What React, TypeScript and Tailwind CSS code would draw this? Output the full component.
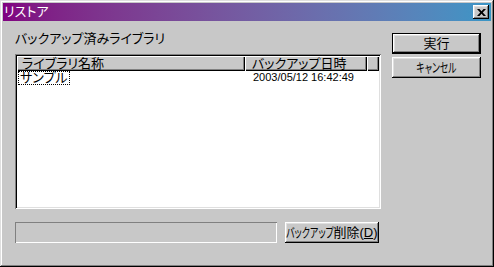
const raised =
  "shadow-[inset_-1px_-1px_#000,inset_1px_1px_#fff,inset_-2px_-2px_#808080,inset_2px_2px_#dfdfdf]";
const sunken =
  "shadow-[inset_1px_1px_#808080,inset_-1px_-1px_#fff,inset_2px_2px_#000,inset_-2px_-2px_#dfdfdf]";
const headerCell =
  "shadow-[inset_1px_1px_#fff,inset_-1px_-1px_#000,inset_-2px_-2px_#808080]";

export default function App() {
  return (
    <div className="w-[494px] h-[267px] bg-[#c8c8c8] p-[3px] flex flex-col font-['Liberation_Sans','Noto_Sans_CJK_JP',sans-serif] text-[13px] text-black [font-feature-settings:'palt'] shadow-[inset_-1px_-1px_#000,inset_1px_1px_#dfdfdf,inset_-2px_-2px_#808080,inset_2px_2px_#fff]">
      {/* Title bar */}
      <div className="h-[18px] flex items-center justify-between bg-gradient-to-r from-[#800080] to-[#3a96c6] pl-[1px] pr-[2px]">
        <span className="text-white leading-[18px]">リストア</span>
        <div className={`w-[16px] h-[14px] bg-[#c8c8c8] flex items-center justify-center ${raised}`}>
          <svg width="9" height="7" viewBox="0 0 9 7">
            <path d="M0 0h2.5l2 2.3 2-2.3H9L5.8 3.5 9 7H6.5l-2-2.3-2 2.3H0l3.2-3.5z" fill="#000" />
          </svg>
        </div>
      </div>

      {/* Body */}
      <div className="flex-1 flex pl-[12px] pt-[11px]">
        <div className="w-[366px] flex flex-col">
          <div className="h-[14px] leading-[14px]">バックアップ済みライブラリ</div>
          <div className={`mt-[8px] h-[155px] bg-white p-[2px] ${sunken}`}>
            <div className="flex h-[15px] bg-[#c8c8c8] leading-[15px]">
              <div className={`w-[228px] pl-[5px] ${headerCell}`}>ライブラリ名称</div>
              <div className={`w-[122px] pl-[7px] ${headerCell}`}>バックアップ日時</div>
              <div className={`flex-1 ${headerCell}`}></div>
            </div>
            <div className="flex h-[14px] leading-[13px]">
              <div className="w-[228px] pl-[1px]">
                <span className="inline-block border border-dotted border-black px-[1px] leading-[12px]">サンプル</span>
              </div>
              <div className="pl-[8px] text-[11px]">2003/05/12 16:42:49</div>
            </div>
          </div>
          <div className="mt-[13px] flex h-[21px]">
            <div className="w-[262px] shadow-[inset_1px_1px_#808080,inset_-1px_-1px_#fff]"></div>
            <button className={`ml-[8px] w-[94px] bg-[#c8c8c8] flex items-center justify-center whitespace-nowrap ${raised}`}>
              <span className="inline-block w-[47px] origin-left scale-x-[0.7]">バックアップ</span>
              <span>削除(<span className="underline">D</span>)</span>
            </button>
          </div>
        </div>

        <div className="ml-[11px] w-[89px] flex flex-col gap-[3px] pt-[1px]">
          <div className="h-[21px] border border-black">
            <button className={`w-full h-full bg-[#c8c8c8] flex items-center justify-center ${raised}`}>
              実行
            </button>
          </div>
          <button className={`h-[21px] w-full bg-[#c8c8c8] flex items-center justify-center ${raised}`}>
            <span className="inline-block whitespace-nowrap scale-x-[0.68]">キャンセル</span>
          </button>
        </div>
      </div>
    </div>
  );
}
